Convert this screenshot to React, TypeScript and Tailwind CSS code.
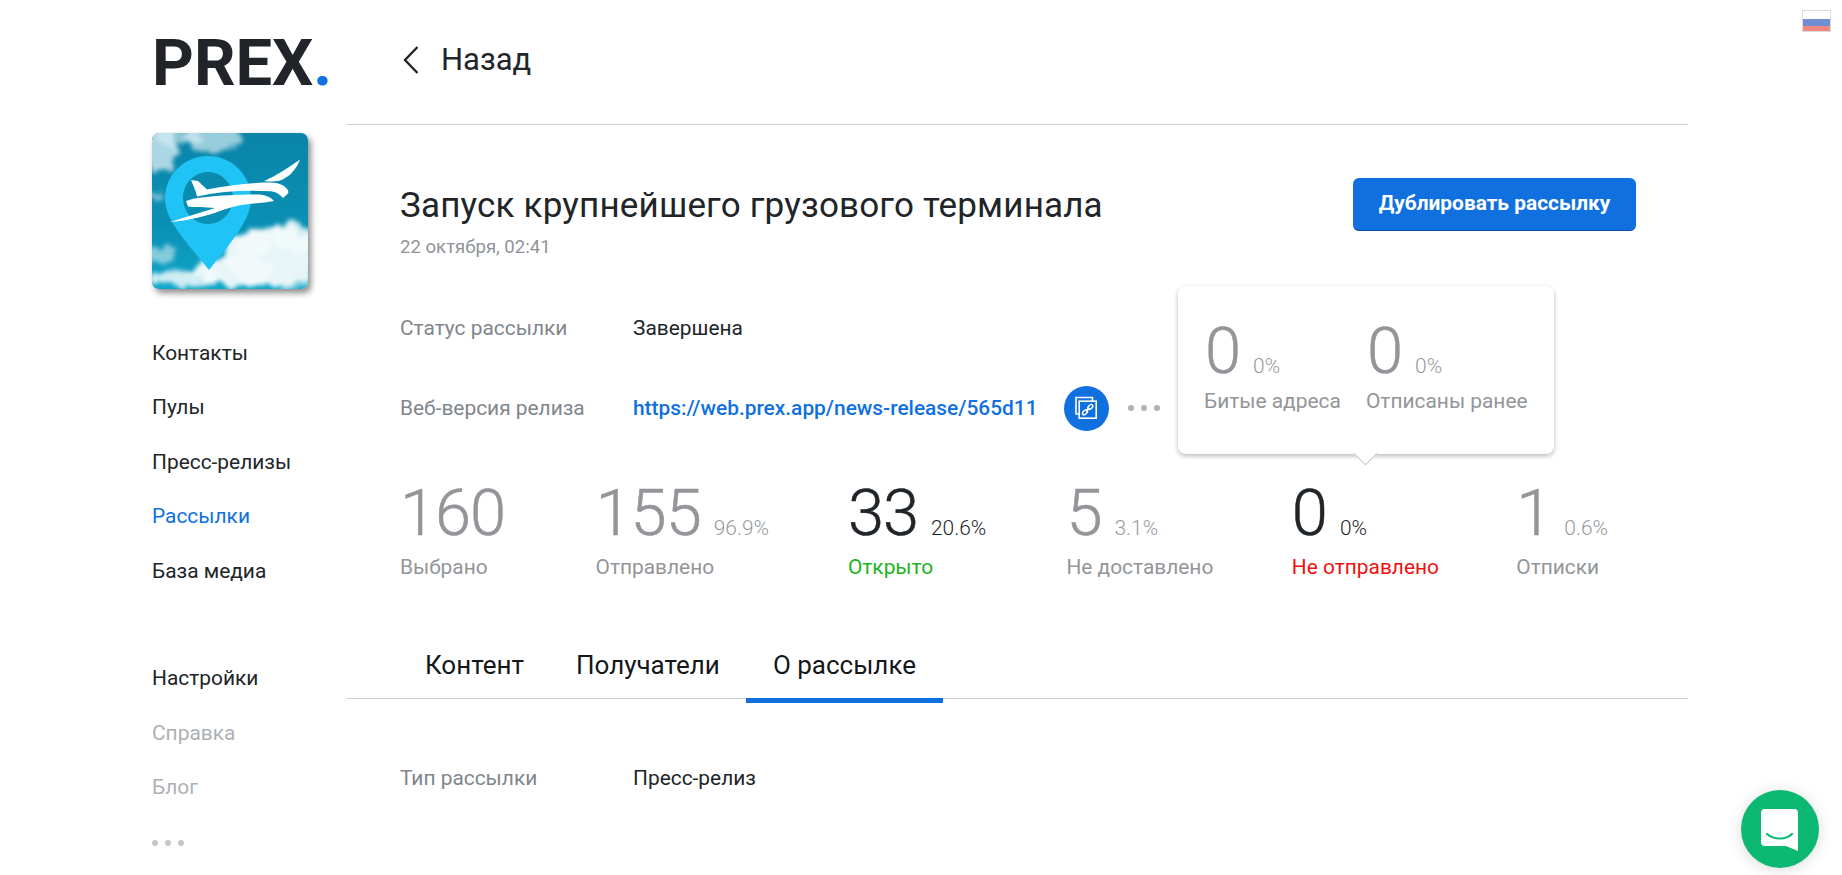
import React from "react";

const Nav = ({ children, cls = "text-[#212529]" }: { children: React.ReactNode; cls?: string }) => (
  <div className={`h-[54.5px] flex items-center text-[20.9px] ${cls}`}>{children}</div>
);

const Dots = ({ color }: { color: string }) => (
  <div className="flex gap-[7px]">
    <span className={`w-[6px] h-[6px] rounded-full ${color}`} />
    <span className={`w-[6px] h-[6px] rounded-full ${color}`} />
    <span className={`w-[6px] h-[6px] rounded-full ${color}`} />
  </div>
);

const Thumb = () => (
  <div className="w-[156px] h-[156px] rounded-[7px] overflow-hidden shadow-[3px_4px_6px_rgba(0,0,0,0.45)]">
    <svg viewBox="0 0 156 156" width="156" height="156" className="block">
      <defs>
        <linearGradient id="sky" x1="0" y1="0" x2="0" y2="1">
          <stop offset="0" stopColor="#0a84a8" />
          <stop offset="0.6" stopColor="#0a90b5" />
          <stop offset="1" stopColor="#0ea6c8" />
        </linearGradient>
        <filter id="cloud" x="-30%" y="-30%" width="160%" height="160%">
          <feTurbulence type="fractalNoise" baseFrequency="0.07" numOctaves="4" seed="7" result="n" />
          <feDisplacementMap in="SourceGraphic" in2="n" scale="18" xChannelSelector="R" yChannelSelector="G" />
          <feGaussianBlur stdDeviation="2" />
        </filter>
      </defs>
      <rect width="156" height="156" fill="url(#sky)" />
      <g filter="url(#cloud)" fill="#d4ebf2">
        <ellipse cx="62" cy="6" rx="28" ry="13" opacity="0.7" />
        <ellipse cx="8" cy="16" rx="16" ry="22" opacity="0.8" />
        <ellipse cx="28" cy="4" rx="24" ry="9" opacity="0.65" />
        <ellipse cx="5" cy="62" rx="10" ry="4" opacity="0.55" />
        <ellipse cx="8" cy="122" rx="16" ry="10" opacity="0.6" />
      </g>
      <g filter="url(#cloud)" fill="#f2fafb">
        <ellipse cx="120" cy="124" rx="48" ry="30" opacity="0.95" />
        <ellipse cx="142" cy="104" rx="22" ry="14" opacity="0.85" />
        <ellipse cx="102" cy="110" rx="18" ry="14" opacity="0.95" />
        <ellipse cx="80" cy="138" rx="40" ry="15" opacity="0.95" />
        <ellipse cx="34" cy="146" rx="38" ry="9" opacity="0.85" />
        <ellipse cx="136" cy="150" rx="24" ry="6" opacity="0.45" />
      </g>
      <path d="M13 66 C13 41 33 23 56 23 C79 23 99 41 99 66 C99 88 76 113 57 137 C38 113 13 88 13 66 Z M31 65 C31 79 42 91 56 91 C70 91 81 79 81 65 C81 51 70 39 56 39 C42 39 31 51 31 65 Z" fill="#1fc3f6" fillRule="evenodd" />
      <g fill="#ffffff">
        <path d="M39 47 L46 48 L55 56.5 C74 53 94 50.5 112 49.5 C121 49 128 50 132 53 C136 56 137 58.5 136 60.5 L131 65 C127 61 124 58.8 119 58.3 C95 57 70 58 45 63.5 L43.5 58 Z" />
        <path d="M112 48 C124 43 136 35 148 26.5 C146 32 141 41 133 45 C128 49 120 49 112 48 Z" />
        <path d="M18 89 C33 84 48 80 63 75 C53 74 43 74.5 36 73.5 L34 68 C39 66 44 65 50 64.5 C70 62 90 61.5 107 61.5 C114 62 120 65 122 68 C112 70 98 70.5 87 72.5 C78 74 71 77 64 79.5 C50 84 34 88 18 89 Z" />
      </g>
    </svg>
  </div>
);

const Stat = ({
  n, p, label, w, numCls = "text-[#939598]", pCls = "text-[#97999c]", labelCls = "text-[#939598]",
}: { n: string; p?: string; label: string; w: string; numCls?: string; pCls?: string; labelCls?: string }) => (
  <div className={w}>
    <div className="flex items-baseline h-[66px]">
      <span className={`text-[65px] leading-[66px] font-light tracking-[-1px] [-webkit-text-stroke:0.5px] ${numCls}`}>{n}</span>
      {p && <span className={`ml-[13px] text-[20.9px] font-light ${pCls}`}>{p}</span>}
    </div>
    <div className={`mt-[9px] text-[20.9px] leading-[24px] ${labelCls}`}>{label}</div>
  </div>
);

const PopStat = ({ label, w }: { label: string; w: string }) => (
  <div className={w}>
    <div className="flex items-baseline h-[66px]">
      <span className="text-[65px] leading-[66px] font-light text-[#939598] pl-[1px] [-webkit-text-stroke:0.5px]">0</span>
      <span className="ml-[12px] text-[20.9px] font-light text-[#97999c]">0%</span>
    </div>
    <div className="mt-[5px] text-[20.9px] leading-[24px] text-[#939598] whitespace-nowrap">{label}</div>
  </div>
);

export default function App() {
  return (
    <div className="relative flex w-full h-[875px] overflow-hidden bg-white font-[Roboto,sans-serif]">
      <aside className="w-[347px] shrink-0 pl-[152px]">
        <div className="h-[133px] pt-[26px]">
          <div className="text-[65px] leading-[75px] font-bold text-[#212529]">
            PREX<span className="text-[#1070e0]">.</span>
          </div>
        </div>
        <Thumb />
        <div className="mt-[37px]">
          <Nav>Контакты</Nav>
          <Nav>Пулы</Nav>
          <Nav>Пресс-релизы</Nav>
          <Nav cls="text-[#1070e0]">Рассылки</Nav>
          <Nav>База медиа</Nav>
        </div>
        <div className="mt-[53px]">
          <Nav>Настройки</Nav>
          <Nav cls="text-[#adb1b5]">Справка</Nav>
          <Nav cls="text-[#adb1b5]">Блог</Nav>
          <div className="h-[54.5px] flex items-center pt-[2px]"><Dots color="bg-[#c3c6c9]" /></div>
        </div>
      </aside>

      <main className="w-[1341px] shrink-0">
        <header className="h-[125px] border-b border-[#cfd2d6] flex items-start pt-[42px] pl-[55px]">
          <svg width="18" height="30" viewBox="0 0 18 30" fill="none" stroke="#212529" strokeWidth="2.4" className="mt-[3px]">
            <path d="M15.5 2 L3 15 L15.5 28" />
          </svg>
          <span className="ml-[21px] text-[31px] leading-[36px] text-[#212529]">Назад</span>
        </header>

        <div className="relative pl-[53px] pr-[52px]">
          <div className="flex justify-between items-start pt-[53px]">
            <div className="pt-[3px]">
              <h1 className="text-[35px] leading-[50px] font-normal text-[#212529] tracking-[0.18px]">Запуск крупнейшего грузового терминала</h1>
              <div className="mt-[4px] text-[18.6px] leading-[24px] text-[#8f9499]">22 октября, 02:41</div>
            </div>
            <button className="w-[283px] h-[53px] rounded-[6px] bg-[#1070e0] border-b border-[#0b4f9f] text-white text-[20.9px] font-bold">Дублировать рассылку</button>
          </div>

          <div className="flex items-center h-[28px] mt-[56px] text-[20.9px]">
            <span className="w-[233px] text-[#7f868c]">Статус рассылки</span>
            <span className="text-[#212529]">Завершена</span>
          </div>

          <div className="flex items-center h-[44px] mt-[43px] text-[20.9px]">
            <span className="w-[233px] text-[#7f868c] pt-[1px]">Веб-версия релиза</span>
            <a className="text-[#1070e0] font-medium pt-[1px]">https://web.prex.app/news-release/565d11</a>
            <span className="ml-[26px] w-[45px] h-[45px] rounded-full bg-[#1070e0] flex items-center justify-center shrink-0">
              <svg width="24" height="24" viewBox="0 0 24 24" fill="none" stroke="#fff">
                <path d="M5 18 H2 V1.5 H18.5 V5" strokeWidth="1.6" />
                <rect x="5.2" y="5.2" width="17" height="17" strokeWidth="1.6" />
                <path d="M11.8 15.5 L15.5 11.8" strokeWidth="1.4" />
                <ellipse cx="11" cy="16.3" rx="3" ry="1.8" transform="rotate(-45 11 16.3)" strokeWidth="1.4" />
                <ellipse cx="16.3" cy="11" rx="3" ry="1.8" transform="rotate(-45 16.3 11)" strokeWidth="1.4" />
              </svg>
            </span>
            <span className="ml-[19px]"><Dots color="bg-[#afb3b7]" /></span>
          </div>

          <div className="flex mt-[50px]">
            <Stat n="160" label="Выбрано" w="w-[196px]" />
            <Stat n="155" p="96.9%" label="Отправлено" w="w-[253px]" />
            <Stat n="33" p="20.6%" label="Открыто" w="w-[219px]" numCls="text-[#212529]" pCls="text-[#212529]" labelCls="text-[#1db31d]" />
            <Stat n="5" p="3.1%" label="Не доставлено" w="w-[226px]" />
            <Stat n="0" p="0%" label="Не отправлено" w="w-[225px]" numCls="text-[#212529]" pCls="text-[#212529]" labelCls="text-[#f01010]" />
            <Stat n="1" p="0.6%" label="Отписки" w="w-[120px]" />
          </div>

          <div className="absolute left-[831px] top-[161px] w-[376px] h-[168px] bg-white rounded-[8px] shadow-[0_2px_5px_rgba(0,0,0,0.28)] flex pl-[26px] pt-[32px]">
            <PopStat label="Битые адреса" w="w-[162px]" />
            <PopStat label="Отписаны ранее" w="w-[160px]" />
            <span className="absolute left-[179px] bottom-[-8px] w-[17px] h-[17px] rotate-45 bg-white border-r border-b border-[#c9cccf]" />
          </div>
        </div>

        <nav className="flex h-[63px] mt-[57px] pl-[52px] border-b border-[#c8ccd4] text-[26px] leading-[30px] text-[#14171a]">
          <div className="px-[26px] pt-[14px]">Контент</div>
          <div className="px-[26px] pt-[14px]">Получатели</div>
          <div className="relative px-[27px] pt-[14px]">
            О рассылке
            <span className="absolute left-0 right-0 bottom-[-5px] h-[5px] bg-[#1070e0]" />
          </div>
        </nav>

        <div className="flex items-center h-[28px] mt-[66px] pl-[53px] text-[20.9px]">
          <span className="w-[233px] text-[#7f868c]">Тип рассылки</span>
          <span className="text-[#212529]">Пресс-релиз</span>
        </div>
      </main>

      <div className="absolute left-[1802px] top-[10px] w-[29px] h-[22px] border border-[#dcdcdc] flex flex-col">
        <span className="h-[8px] bg-white" />
        <span className="h-[6.5px] bg-[#6f8fd2]" />
        <span className="h-[5.5px] bg-[#ee8880]" />
      </div>

      <div className="absolute left-[1741px] top-[790px] w-[78px] h-[78px] rounded-full bg-[#0db873] shadow-[0_2px_16px_rgba(0,0,0,0.14)] flex items-center justify-center">
        <svg width="38" height="44" viewBox="0 0 38 44" className="mt-[2px]">
          <path d="M4 1 H33 a4 4 0 0 1 4 4 V43 L25 38 H4 a4 4 0 0 1 -4 -4 V5 a4 4 0 0 1 4 -4 Z" fill="#fff" />
          <path d="M6 26 C13 32 25 32 31 26" fill="none" stroke="#0db873" strokeWidth="2.2" strokeLinecap="round" />
        </svg>
      </div>
    </div>
  );
}
